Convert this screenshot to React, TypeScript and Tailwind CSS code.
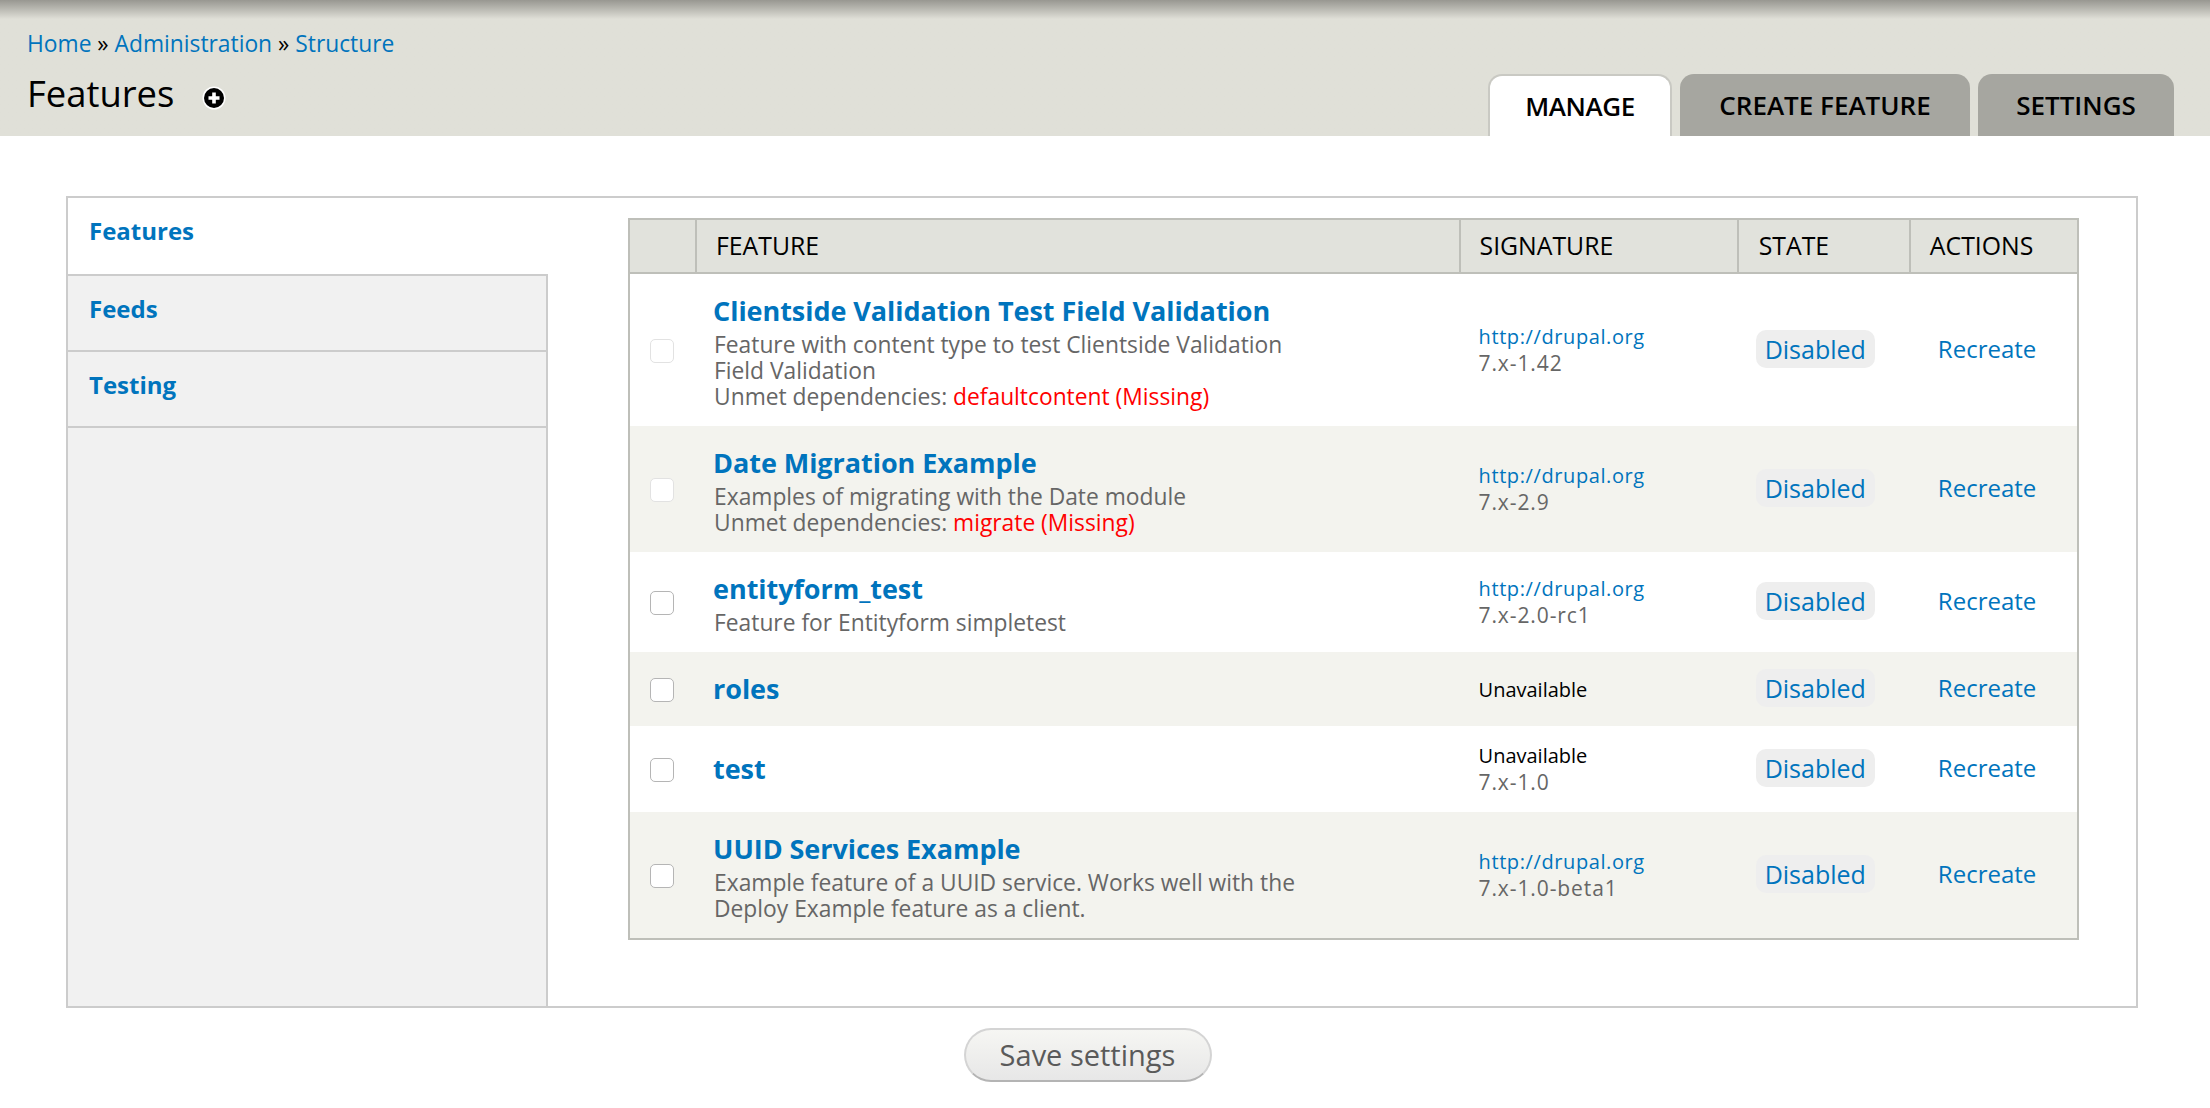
import React from "react";

const font = "font-['Open_Sans','Noto_Sans',sans-serif]";

type Row = {
  title: string;
  desc?: string[];
  missing?: string;
  disabled?: boolean;
  sig: string;
  version?: string;
  odd: boolean;
};

const rows: Row[] = [
  {
    title: "Clientside Validation Test Field Validation",
    desc: ["Feature with content type to test Clientside Validation", "Field Validation"],
    missing: "defaultcontent (Missing)",
    disabled: true,
    sig: "http://drupal.org",
    version: "7.x-1.42",
    odd: true,
  },
  {
    title: "Date Migration Example",
    desc: ["Examples of migrating with the Date module"],
    missing: "migrate (Missing)",
    disabled: true,
    sig: "http://drupal.org",
    version: "7.x-2.9",
    odd: false,
  },
  {
    title: "entityform_test",
    desc: ["Feature for Entityform simpletest"],
    sig: "http://drupal.org",
    version: "7.x-2.0-rc1",
    odd: true,
  },
  { title: "roles", sig: "Unavailable", odd: false },
  { title: "test", sig: "Unavailable", version: "7.x-1.0", odd: true },
  {
    title: "UUID Services Example",
    desc: ["Example feature of a UUID service. Works well with the", "Deploy Example feature as a client."],
    sig: "http://drupal.org",
    version: "7.x-1.0-beta1",
    odd: false,
  },
];

function Tab({ label, active }: { label: string; active?: boolean }) {
  return (
    <a
      className={
        active
          ? "flex h-[62px] w-[184px] items-center justify-center rounded-t-[14px] border-2 border-b-0 border-[#c9c9c3] bg-white pt-[1px] text-[26px] font-semibold tracking-[-0.4px] text-black"
          : "flex h-[62px] items-center justify-center rounded-t-[14px] bg-[#a6a6a0] pt-[1px] text-[26px] font-semibold text-black"
      }
    >
      {label}
    </a>
  );
}

function SideItem({ label }: { label: string }) {
  return (
    <div className="h-[76px] border-b-2 border-[#ccc] pl-[21px] pt-[17px] text-[24px] leading-[32px] font-bold text-[#0074bd]">
      {label}
    </div>
  );
}

export default function App() {
  return (
    <div className={`${font} min-h-[1108px] bg-white`}>
      <header className="flex h-[136px] items-stretch justify-between bg-[#e0e0d8] bg-linear-to-b from-[#989791] via-[#e0e0d8] via-[14%] to-[#e0e0d8] pr-[36px] pl-[27px]">
        <div className="pt-[29px]">
          <div className="text-[22.8px] leading-[30px] text-black">
            <a className="text-[#0074bd]">Home</a> » <a className="text-[#0074bd]">Administration</a> »{" "}
            <a className="text-[#0074bd]">Structure</a>
          </div>
          <div className="mt-[11px] flex items-center">
            <h1 className="text-[36.4px] leading-[46px] text-black">Features</h1>
            <svg width="24" height="24" viewBox="0 0 24 24" className="mt-[10px] ml-[28px]">
              <circle cx="12" cy="12" r="11.5" fill="#fff" />
              <circle cx="12" cy="12" r="10" fill="#000" />
              <path d="M12 6.5v11M6.5 12h11" stroke="#fff" strokeWidth="3.6" />
            </svg>
          </div>
        </div>
        <nav className="flex items-end gap-[8px]">
          <Tab label="MANAGE" active />
          <div className="w-[290px]">
            <Tab label="CREATE FEATURE" />
          </div>
          <div className="w-[196px]">
            <Tab label="SETTINGS" />
          </div>
        </nav>
      </header>

      <main className="mt-[60px] ml-[66px] mr-[72px]">
        <div className="flex h-[812px] border-2 border-[#ccc]">
          <aside className="flex w-[480px] shrink-0 flex-col">
            <div className="h-[78px] border-b-2 border-[#ccc] bg-white pl-[21px] pt-[17px] text-[24px] leading-[32px] font-bold text-[#0074bd]">
              Features
            </div>
            <div className="flex-1 border-r-2 border-[#ccc] bg-[#f1f1f1]">
              <SideItem label="Feeds" />
              <SideItem label="Testing" />
            </div>
          </aside>
          <section className="flex-1 pt-[20px] pl-[80px] pr-[57px]">
            <div className="border-2 border-[#bebfb9]">
              <table className="w-full table-fixed border-separate border-spacing-0">
                <colgroup>
                  <col className="w-[65px]" />
                  <col className="w-[763px]" />
                  <col className="w-[278px]" />
                  <col className="w-[172px]" />
                  <col className="w-[168px]" />
                </colgroup>
                <thead>
                  <tr className="h-[54px] bg-[#e1e2dc] text-left text-[24.8px] font-normal text-black">
                    <th className="border-b-2 border-[#bebfb9]" />
                    <th className="border-b-2 border-l-2 border-[#bebfb9] pl-[19px] font-normal">FEATURE</th>
                    <th className="border-b-2 border-l-2 border-[#bebfb9] pl-[19px] font-normal">SIGNATURE</th>
                    <th className="border-b-2 border-l-2 border-[#bebfb9] pl-[20px] font-normal">STATE</th>
                    <th className="border-b-2 border-l-2 border-[#bebfb9] pl-[19px] font-normal">ACTIONS</th>
                  </tr>
                </thead>
                <tbody>
                  {rows.map((r) => (
                    <tr key={r.title} className={r.odd ? "bg-white" : "bg-[#f3f3ee]"}>
                      <td className="py-[18px] align-middle">
                        <div
                          className={
                            r.disabled
                              ? "mt-[2px] ml-[20px] h-[24px] w-[24px] rounded-[5px] border border-[#e2e2e2] bg-white"
                              : "mt-[2px] ml-[20px] h-[24px] w-[24px] rounded-[5px] border border-[#b5b5b5] bg-white"
                          }
                        />
                      </td>
                      <td className="py-[18px] pl-[18px] align-middle">
                        <a className="block text-[27px] leading-[38px] font-bold tracking-[-0.05px] text-[#0074bd]">
                          {r.title}
                        </a>
                        {(r.desc || r.missing) && (
                          <div className="mt-[2px] -mb-[2px] ml-[1px] text-[22.8px] leading-[26px] text-[#666]">
                            {r.desc?.map((d) => (
                              <div key={d}>{d}</div>
                            ))}
                            {r.missing && (
                              <div>
                                Unmet dependencies: <span className="text-[#f00]">{r.missing}</span>
                              </div>
                            )}
                          </div>
                        )}
                      </td>
                      <td className="py-[16px] pl-[20px] align-middle">
                        <div
                          className={
                            r.sig === "Unavailable"
                              ? "text-[20px] leading-[27px] text-black"
                              : "text-[20px] leading-[27px] tracking-[0.6px] text-[#0074bd]"
                          }
                        >
                          {r.sig}
                        </div>
                        {r.version && (
                          <div className="text-[21px] leading-[27px] tracking-[0.9px] text-[#666]">{r.version}</div>
                        )}
                      </td>
                      <td className="pl-[19px] align-middle">
                        <span className="mb-[3px] block w-[119px] rounded-[10px] bg-[#eeeeee] text-center text-[25px] leading-[38px] text-[#0074bd]">
                          Disabled
                        </span>
                      </td>
                      <td className="pl-[29px] align-middle">
                        <a className="mb-[3px] block text-[24px] leading-[38px] text-[#0074bd]">Recreate</a>
                      </td>
                    </tr>
                  ))}
                </tbody>
              </table>
            </div>
          </section>
        </div>
        <div className="mt-[20px] flex justify-center pr-[29px]">
          <button className="h-[54px] w-[248px] rounded-[27px] border-2 border-[#d4d4d4] border-b-[#b4b4b4] bg-linear-to-b from-[#f6f6f3] to-[#e7e7e7] text-[29px] text-[#5a5a5a]">
            Save settings
          </button>
        </div>
      </main>
    </div>
  );
}
